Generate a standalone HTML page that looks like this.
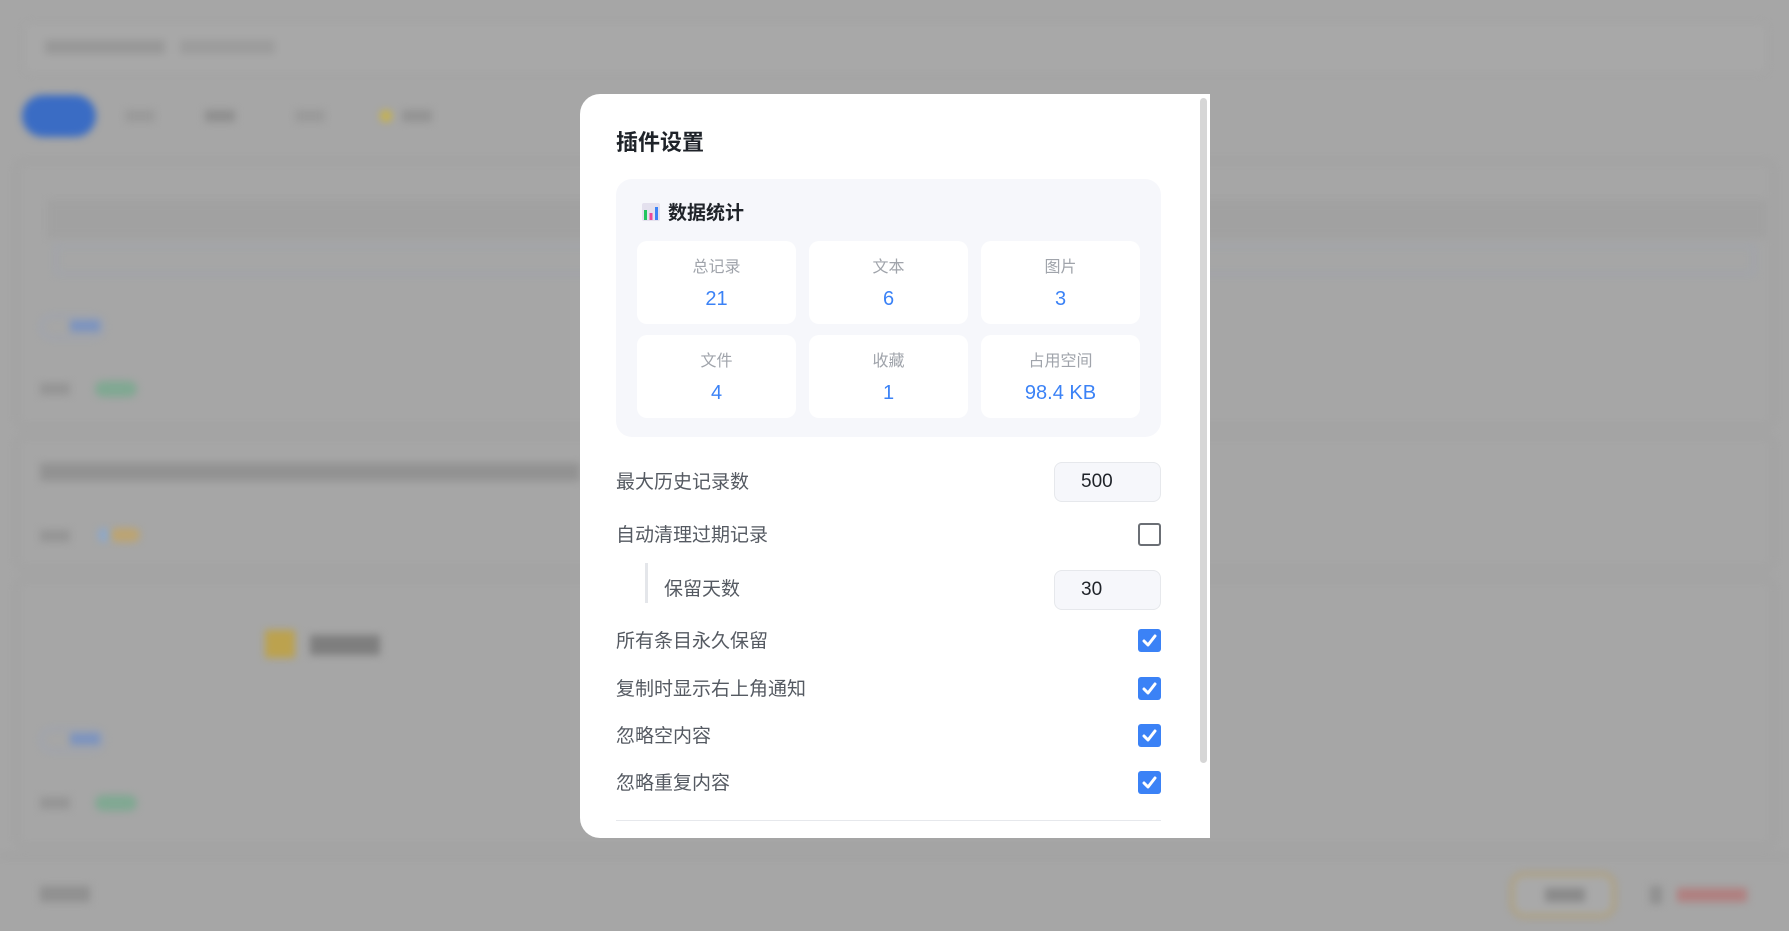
<!DOCTYPE html>
<html><head><meta charset="utf-8"><style>
*{box-sizing:border-box;margin:0;padding:0}
body{width:1789px;height:931px;overflow:hidden;background:#a6a6a6;font-family:"Liberation Sans","Noto Sans CJK SC",sans-serif;position:relative}
.bg{position:absolute;inset:0;filter:blur(4px)}
.b{position:absolute}
.modal{position:absolute;left:580px;top:94px;width:630px;height:744px;background:#fff;border-radius:20px 0 0 20px;overflow:hidden}
.sb{position:absolute;left:620px;top:4px;width:7px;height:665px;background:#d6d6d6;border-radius:4px}
h2{position:absolute;left:36px;top:31px;font-size:22px;font-weight:bold;color:#1f2329}
.stats{position:absolute;left:36px;top:85px;width:545px;height:258px;background:#f6f7fb;border-radius:16px}
.sh{position:absolute;left:26px;top:19px;font-size:19px;font-weight:bold;color:#1f2329;display:flex;align-items:center}
.card{position:absolute;width:159px;height:83px;background:#fff;border-radius:10px;text-align:center}
.card .l{margin-top:17px;font-size:16px;color:#a0a4ab;line-height:20px}
.card .v{margin-top:10px;font-size:20px;color:#3b82f6;line-height:22px}
.row{position:absolute;left:36px;width:545px;font-size:19px;color:#555a62;line-height:24px}
.inp{position:absolute;right:0;width:107px;height:40px;background:#f6f7fb;border:1px solid #e6e8ec;border-radius:8px;text-align:left;padding-left:26px;font-size:19px;color:#1f2329;line-height:38px}
.cb{position:absolute;right:0;width:23px;height:23px;border-radius:3px;background:#3b82f6}
.cb.off{background:#fff;border:2px solid #6b6f75}
</style></head><body>
<div class="bg">
 <div class="b" style="left:23px;top:22px;width:1745px;height:52px;background:#a8a8a8;border:1px solid #9f9f9f;border-radius:8px"></div>
 <div class="b" style="left:45px;top:40px;width:120px;height:14px;background:#989898"></div>
 <div class="b" style="left:180px;top:40px;width:95px;height:14px;background:#9c9c9c"></div>
 <div class="b" style="left:22px;top:95px;width:74px;height:42px;background:#3a6cc4;border-radius:21px"></div>
 <div class="b" style="left:125px;top:110px;width:30px;height:12px;background:#9a9a9a"></div>
 <div class="b" style="left:205px;top:110px;width:30px;height:12px;background:#8f8f8f"></div>
 <div class="b" style="left:295px;top:110px;width:30px;height:12px;background:#9a9a9a"></div>
 <div class="b" style="left:380px;top:110px;width:12px;height:12px;background:#c7b24a;border-radius:6px"></div>
 <div class="b" style="left:402px;top:110px;width:30px;height:12px;background:#939393"></div>
 <div class="b" style="left:15px;top:160px;width:1760px;height:268px;border:2px solid #9e9e9e;border-radius:10px"></div>
 <div class="b" style="left:47px;top:200px;width:1720px;height:38px;background:#a1a1a1"></div>
 <div class="b" style="left:55px;top:245px;width:1700px;height:30px;border:2px solid #9ca3b0"></div>
 <div class="b" style="left:40px;top:315px;width:65px;height:24px;border:2px solid #9aa3b8;border-radius:12px"></div>
 <div class="b" style="left:70px;top:320px;width:30px;height:12px;background:#7b93c0"></div>
 <div class="b" style="left:40px;top:383px;width:30px;height:12px;background:#959595"></div>
 <div class="b" style="left:95px;top:381px;width:42px;height:16px;background:#80a892;border-radius:8px"></div>
 <div class="b" style="left:15px;top:435px;width:1760px;height:135px;border:2px solid #9e9e9e;border-radius:10px"></div>
 <div class="b" style="left:40px;top:463px;width:540px;height:18px;background:#929292"></div>
 <div class="b" style="left:40px;top:530px;width:30px;height:12px;background:#959595"></div>
 <div class="b" style="left:98px;top:528px;width:12px;height:14px;background:#8ea8c8;border-radius:6px"></div>
 <div class="b" style="left:110px;top:528px;width:30px;height:14px;background:#bca472;border-radius:7px"></div>
 <div class="b" style="left:15px;top:578px;width:1760px;height:270px;border:2px solid #9e9e9e;border-radius:10px"></div>
 <div class="b" style="left:265px;top:630px;width:30px;height:28px;background:#bca24e"></div>
 <div class="b" style="left:310px;top:635px;width:70px;height:20px;background:#7e7e7e"></div>
 <div class="b" style="left:40px;top:728px;width:65px;height:24px;border:2px solid #9aa3b8;border-radius:12px"></div>
 <div class="b" style="left:70px;top:733px;width:30px;height:12px;background:#7b93c0"></div>
 <div class="b" style="left:40px;top:797px;width:30px;height:12px;background:#959595"></div>
 <div class="b" style="left:95px;top:795px;width:42px;height:16px;background:#80a892;border-radius:8px"></div>
 <div class="b" style="left:0;top:855px;width:1789px;height:2px;background:#9c9c9c"></div>
 <div class="b" style="left:40px;top:886px;width:50px;height:16px;background:#909090"></div>
 <div class="b" style="left:1510px;top:872px;width:106px;height:46px;border:4px solid #b0a07a;border-radius:14px;background:#a9a9a9"></div>
 <div class="b" style="left:1545px;top:888px;width:40px;height:14px;background:#8a8a8a"></div>
 <div class="b" style="left:1650px;top:886px;width:12px;height:18px;background:#8f8f8f"></div>
 <div class="b" style="left:1677px;top:888px;width:70px;height:14px;background:#b08080"></div>
</div>
<div class="modal">
 <div class="sb"></div>
 <h2>插件设置</h2>
 <div class="stats">
  <div class="sh"><svg width="18" height="20" viewBox="0 0 18 20" style="margin-right:8px"><rect x="0" y="1" width="18" height="18" rx="2" fill="#e4e1ee"/><rect x="2" y="8" width="3" height="10" fill="#22c55e"/><rect x="7.5" y="11" width="3" height="7" fill="#ec4899"/><rect x="13" y="5" width="3" height="13" fill="#3b82f6"/></svg>数据统计</div>
  <div class="card" style="left:21px;top:62px"><div class="l">总记录</div><div class="v">21</div></div>
  <div class="card" style="left:193px;top:62px"><div class="l">文本</div><div class="v">6</div></div>
  <div class="card" style="left:365px;top:62px"><div class="l">图片</div><div class="v">3</div></div>
  <div class="card" style="left:21px;top:156px"><div class="l">文件</div><div class="v">4</div></div>
  <div class="card" style="left:193px;top:156px"><div class="l">收藏</div><div class="v">1</div></div>
  <div class="card" style="left:365px;top:156px"><div class="l">占用空间</div><div class="v">98.4 KB</div></div>
 </div>
 <div class="row" style="top:377px">最大历史记录数<div class="inp" style="top:-9px">500</div></div>
 <div class="row" style="top:430px">自动清理过期记录<div class="cb off" style="top:-1px"></div></div>
 <div class="row" style="top:484px"><div style="position:absolute;left:29px;top:-15px;width:3px;height:40px;background:#e4e6ea"></div><span style="margin-left:48px">保留天数</span><div class="inp" style="top:-8px">30</div></div>
 <div class="row" style="top:536px">所有条目永久保留<svg class="cb" style="top:-1px" viewBox="0 0 23 23"><path d="M6 12l4 4 7-9" stroke="#fff" stroke-width="3" fill="none" stroke-linecap="round" stroke-linejoin="round"/></svg></div>
 <div class="row" style="top:584px">复制时显示右上角通知<svg class="cb" style="top:-1px" viewBox="0 0 23 23"><path d="M6 12l4 4 7-9" stroke="#fff" stroke-width="3" fill="none" stroke-linecap="round" stroke-linejoin="round"/></svg></div>
 <div class="row" style="top:631px">忽略空内容<svg class="cb" style="top:-1px" viewBox="0 0 23 23"><path d="M6 12l4 4 7-9" stroke="#fff" stroke-width="3" fill="none" stroke-linecap="round" stroke-linejoin="round"/></svg></div>
 <div class="row" style="top:678px">忽略重复内容<svg class="cb" style="top:-1px" viewBox="0 0 23 23"><path d="M6 12l4 4 7-9" stroke="#fff" stroke-width="3" fill="none" stroke-linecap="round" stroke-linejoin="round"/></svg></div>
 <div style="position:absolute;left:36px;top:726px;width:545px;height:1px;background:#e6e8ec"></div>
</div>
</body></html>
